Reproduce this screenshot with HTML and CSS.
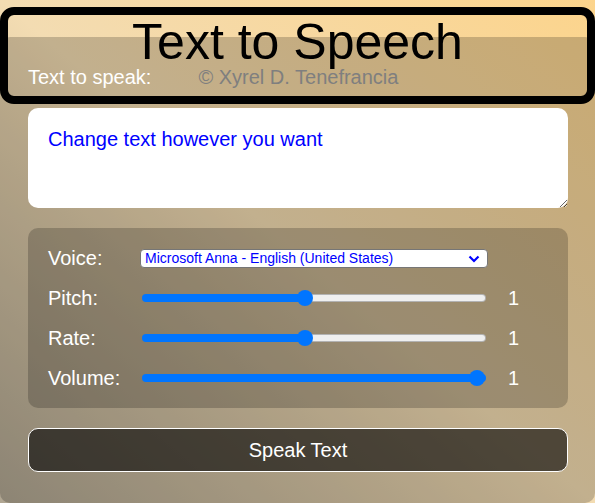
FILE: index.html
```html
<!DOCTYPE html>
<html lang="en">
<head>
<meta charset="utf-8">
<title>Text to Speech</title>
<link rel="stylesheet" href="styles.css">
</head>
<body>
<div class="app">
  <header class="title-box">
    <h1 class="title">Text to Speech</h1>
    <div class="speak-row">
      <label class="speak-label" for="text">Text to speak:</label>
      <span class="credit">© Xyrel D. Tenefrancia</span>
    </div>
  </header>
  <textarea id="text" class="text-input">Change text however you want</textarea>
  <div class="controls">
    <label class="ctl-label" for="voice">Voice:</label>
    <div class="voice-wrap">
      <select id="voice" class="voice"><option>Microsoft Anna - English (United States)</option></select>
      <svg class="chev" width="12" height="8" viewBox="0 0 12 8" aria-hidden="true"><path d="M1.5 1.5 6 6l4.5-4.5" fill="none" stroke="#0000ff" stroke-width="2.2"/></svg>
    </div>
    <span class="val"></span>

    <label class="ctl-label" for="pitch">Pitch:</label>
    <input id="pitch" class="slider" type="range" min="0.1" max="2" step="0.1" value="1" style="--fill:47.4%">
    <span class="val">1</span>

    <label class="ctl-label" for="rate">Rate:</label>
    <input id="rate" class="slider" type="range" min="0.1" max="2" step="0.1" value="1" style="--fill:47.4%">
    <span class="val">1</span>

    <label class="ctl-label" for="volume">Volume:</label>
    <input id="volume" class="slider" type="range" min="0" max="1" step="0.1" value="1" style="--fill:100%">
    <span class="val">1</span>
  </div>
  <button class="speak-btn" type="button">Speak Text</button>
</div>
</body>
</html>
```

FILE: styles.css
```css
html, body {
  height: 100%;
}

body {
  margin: 0;
  min-height: 503px;
  background: linear-gradient(to top right, #b0a692 0%, #f3dcb2 50%, #fcd48c 100%);
  font-family: "Liberation Sans", Arial, sans-serif;
}

.app {
  display: flow-root;
  margin-top: 37px;
  min-height: 466px;
  box-sizing: border-box;
  padding: 0 27px 31px 28px;
  background: rgba(0, 0, 0, 0.2);
  border-radius: 10px;
}

.title-box {
  margin: -30px -27px 4px -28px;
  border: 8px solid #000;
  border-radius: 14px;
  padding: 4px 20px 7px;
}

.title {
  margin: 0;
  font-family: "Liberation Sans", Arial, sans-serif;
  font-weight: 400;
  font-size: 50px;
  line-height: 47px;
  text-align: center;
  color: #000;
}

.speak-row {
  display: flex;
  gap: 47px;
  font-size: 20px;
  line-height: 23px;
}

.speak-label {
  color: #fff;
}

.credit {
  color: #7f7f7f;
}

.text-input {
  display: block;
  width: 100%;
  height: 100px;
  box-sizing: border-box;
  margin: 0;
  border: none;
  border-radius: 10px;
  padding: 20px;
  background: #fff;
  color: #0000ff;
  font-family: "Liberation Sans", Arial, sans-serif;
  font-size: 20px;
  outline: none;
}

.controls {
  margin-top: 20px;
  padding: 10px 20px;
  background: rgba(0, 0, 0, 0.2);
  border-radius: 10px;
  display: grid;
  grid-template-columns: 92px 1fr 60px;
  grid-auto-rows: 40px;
  align-items: center;
}

.ctl-label {
  color: #fff;
  font-size: 20px;
}

.val {
  color: #fff;
  font-size: 20px;
  padding-left: 20px;
}

.voice-wrap {
  position: relative;
  height: 19px;
}

.voice {
  -webkit-appearance: none;
  appearance: none;
  display: block;
  width: 100%;
  height: 19px;
  box-sizing: border-box;
  margin: 0;
  padding: 0 20px 0 4px;
  border: 1px solid #767676;
  border-radius: 4px;
  background: #fff;
  color: #0000ff;
  font-family: "Liberation Sans", Arial, sans-serif;
  font-size: 14px;
  line-height: 17px;
}

.chev {
  position: absolute;
  right: 8px;
  top: 6px;
  pointer-events: none;
}

.slider {
  -webkit-appearance: none;
  appearance: none;
  display: block;
  width: auto;
  height: 16px;
  margin: 0 2px;
  padding: 0;
  background: transparent;
}

.slider::-webkit-slider-runnable-track {
  box-sizing: border-box;
  height: 8px;
  border: 1px solid transparent;
  border-radius: 4px;
  background:
    linear-gradient(to right, #0075ff var(--fill), transparent var(--fill)) border-box,
    linear-gradient(#efefef, #efefef) padding-box,
    linear-gradient(#b2b2b2, #b2b2b2) border-box;
}

.slider::-webkit-slider-thumb {
  -webkit-appearance: none;
  appearance: none;
  width: 16px;
  height: 16px;
  margin-top: -5px;
  border: none;
  border-radius: 50%;
  background: #0075ff;
}

.speak-btn {
  display: block;
  width: 100%;
  height: 44px;
  margin-top: 20px;
  padding: 0;
  border: 1px solid #fff;
  border-radius: 10px;
  background: rgba(0, 0, 0, 0.6);
  color: #fff;
  font-family: "Liberation Sans", Arial, sans-serif;
  font-size: 20px;
}
```
